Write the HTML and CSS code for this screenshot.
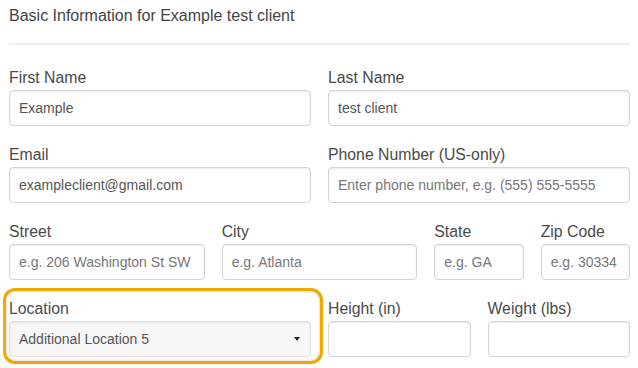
FILE: index.html
```html
<!DOCTYPE html>
<html lang="en">
<head>
    <meta charset="UTF-8">
    <title>Basic Information</title>
    <link rel="stylesheet" href="styles.css">
</head>
<body>
    <h2 class="title">Basic Information for Example test client</h2>
    <hr class="divider">

    <form class="form">
        <div class="field span-6">
            <label>First Name</label>
            <input class="control" type="text" value="Example">
        </div>
        <div class="field span-6">
            <label>Last Name</label>
            <input class="control" type="text" value="test client">
        </div>

        <div class="field span-6">
            <label>Email</label>
            <input class="control" type="text" value="exampleclient@gmail.com">
        </div>
        <div class="field span-6">
            <label>Phone Number (US-only)</label>
            <input class="control" type="text" placeholder="Enter phone number, e.g. (555) 555-5555">
        </div>

        <div class="field span-4">
            <label>Street</label>
            <input class="control" type="text" placeholder="e.g. 206 Washington St SW">
        </div>
        <div class="field span-4">
            <label>City</label>
            <input class="control" type="text" placeholder="e.g. Atlanta">
        </div>
        <div class="field span-2">
            <label>State</label>
            <input class="control" type="text" placeholder="e.g. GA">
        </div>
        <div class="field span-2">
            <label>Zip Code</label>
            <input class="control" type="text" placeholder="e.g. 30334">
        </div>

        <div class="field span-6 highlighted">
            <label>Location</label>
            <div class="control select">
                <span>Additional Location 5</span>
                <span class="caret"></span>
            </div>
        </div>
        <div class="field span-3">
            <label>Height (in)</label>
            <input class="control" type="text">
        </div>
        <div class="field span-3">
            <label>Weight (lbs)</label>
            <input class="control" type="text">
        </div>
    </form>
</body>
</html>
```

FILE: styles.css
```css
* {
    margin: 0;
    padding: 0;
    box-sizing: border-box;
}

body {
    background-color: #fff;
    color: #444;
    font-family: 'Liberation Sans', Arial, sans-serif;
    padding: 3px 8px 20px 9px;
}

.title {
    font-size: 16px;
    font-weight: normal;
    line-height: 26px;
    color: #444;
}

.divider {
    border: 0;
    border-top: 2px solid #eee;
    margin: 14px 0 23px;
}

.form {
    display: grid;
    grid-template-columns: repeat(12, 1fr);
    column-gap: 17px;
    row-gap: 19px;
}

.span-2 { grid-column: span 2; }
.span-3 { grid-column: span 3; }
.span-4 { grid-column: span 4; }
.span-6 { grid-column: span 6; }

.field {
    position: relative;
}

.field label {
    display: block;
    font-size: 15.8px;
    line-height: 20px;
    margin-bottom: 2px;
    color: #4a4a4a;
}

.control {
    display: block;
    width: 100%;
    height: 36px;
    padding: 0 9px;
    border: 1px solid #d4d4d4;
    border-radius: 4px;
    box-shadow: inset 0 1px 2px rgba(0, 0, 0, .08);
    font: 14px 'Liberation Sans', Arial, sans-serif;
    color: #555;
    background-color: #fff;
    outline: none;
}

.control::placeholder {
    color: #777;
}

.select {
    display: flex;
    align-items: center;
    justify-content: space-between;
    background-color: #f7f7f7;
    border-color: #e0e0e0;
    padding-right: 10px;
}

.caret {
    width: 0;
    height: 0;
    border-left: 3.5px solid transparent;
    border-right: 3.5px solid transparent;
    border-top: 4px solid #222;
}

/* orange callout drawn over the location field */
.highlighted::after {
    content: "";
    position: absolute;
    top: -11px;
    left: -6px;
    right: -12px;
    bottom: -7px;
    border: 3px solid #f5a700;
    border-radius: 12px;
    box-shadow: inset 0 0 3px rgba(0, 0, 0, .25);
    pointer-events: none;
}
```
